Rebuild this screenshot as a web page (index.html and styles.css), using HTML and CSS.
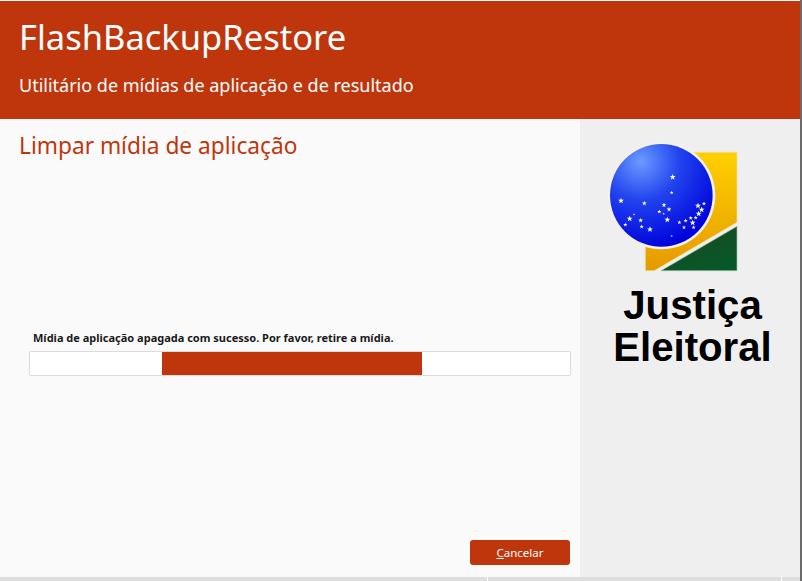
FILE: index.html
```html
<!DOCTYPE html>
<html lang="pt-BR">

<head>
    <meta charset="UTF-8">
    <title>FlashBackupRestore</title>
    <link rel="stylesheet" href="styles.css">
</head>

<body>
    <div class="window">
        <header class="banner">
            <h1>FlashBackupRestore</h1>
            <p>Utilitário de mídias de aplicação e de resultado</p>
        </header>
        <div class="content">
            <main class="panel">
                <h2>Limpar mídia de aplicação</h2>
                <p class="status">Mídia de aplicação apagada com sucesso. Por favor, retire a mídia.</p>
                <div class="progress">
                    <div class="progress-fill"></div>
                </div>
                <button class="cancel" type="button"><u>C</u>ancelar</button>
            </main>
            <aside class="side">
                <svg class="emblem" width="150" height="145" viewBox="0 0 450 435">
                    <defs>
                        <linearGradient id="gold" x1="0" y1="0" x2="0" y2="1">
                            <stop offset="0" stop-color="#ffd000" />
                            <stop offset="1" stop-color="#e59a00" />
                        </linearGradient>
                        <linearGradient id="green" x1="0.3" y1="0" x2="0.8" y2="1">
                            <stop offset="0" stop-color="#1a4a1e" />
                            <stop offset="1" stop-color="#06592b" />
                        </linearGradient>
                        <radialGradient id="globe" cx="0.3" cy="0.17" r="0.85">
                            <stop offset="0" stop-color="#6a9bff" />
                            <stop offset="0.45" stop-color="#2143ee" />
                            <stop offset="1" stop-color="#0004dc" />
                        </radialGradient>
                        <polygon id="star" points="0,-9 2.3,-2.8 9,-2.8 3.6,1.1 5.6,8 0,3.8 -5.6,8 -3.6,1.1 -9,-2.8 -2.3,-2.8" fill="#fff" />
                    </defs>
                    <polygon points="136,55 411,55 411,265 163,410 136,410" fill="url(#gold)" stroke="#f5e3a0" stroke-width="2" />
                    <polygon points="183,410 411,277 411,410" fill="url(#green)" stroke="#a8c4a8" stroke-width="2" />
                    <circle cx="184" cy="184" r="162" fill="#f4f1ea" />
                    <circle cx="184" cy="184" r="154" fill="url(#globe)" />
                    <use href="#star" x="218" y="129" />
                    <use href="#star" x="215" y="176" transform="translate(215 176) scale(.6) translate(-215 -176)" />
                    <use href="#star" x="63" y="200" />
                    <use href="#star" x="133" y="208" transform="translate(133 208) scale(.8) translate(-133 -208)" />
                    <use href="#star" x="192" y="213" transform="translate(192 213) scale(.8) translate(-192 -213)" />
                    <use href="#star" x="207" y="226" transform="translate(207 226) scale(.8) translate(-207 -226)" />
                    <use href="#star" x="178" y="233" transform="translate(178 233) scale(.7) translate(-178 -233)" />
                    <use href="#star" x="191" y="239" transform="translate(191 239) scale(.4) translate(-191 -239)" />
                    <use href="#star" x="102" y="241" transform="translate(102 241) scale(.4) translate(-102 -241)" />
                    <use href="#star" x="89" y="254" />
                    <use href="#star" x="76" y="272" transform="translate(76 272) scale(.7) translate(-76 -272)" />
                    <use href="#star" x="122" y="259" transform="translate(122 259) scale(.8) translate(-122 -259)" />
                    <use href="#star" x="125" y="278" transform="translate(125 278) scale(.7) translate(-125 -278)" />
                    <use href="#star" x="150" y="286" />
                    <use href="#star" x="202" y="257" />
                    <use href="#star" x="215" y="306" transform="translate(215 306) scale(.4) translate(-215 -306)" />
                    <use href="#star" x="238" y="265" transform="translate(238 265) scale(.7) translate(-238 -265)" />
                    <use href="#star" x="257" y="260" transform="translate(257 260) scale(.7) translate(-257 -260)" />
                    <use href="#star" x="272" y="252" transform="translate(272 252) scale(.7) translate(-272 -252)" />
                    <use href="#star" x="287" y="251" transform="translate(287 251) scale(.7) translate(-287 -251)" />
                    <use href="#star" x="296" y="239" />
                    <use href="#star" x="305" y="227" />
                    <use href="#star" x="294" y="215" />
                    <use href="#star" x="312" y="209" transform="translate(312 209) scale(.7) translate(-312 -209)" />
                    <use href="#star" x="278" y="266" />
                    <use href="#star" x="252" y="280" transform="translate(252 280) scale(.7) translate(-252 -280)" />
                    <use href="#star" x="281" y="280" transform="translate(281 280) scale(.7) translate(-281 -280)" />
                </svg>
                <div class="court">Justiça<br>Eleitoral</div>
            </aside>
        </div>
        <footer class="strip">
            <span class="tick"></span>
            <span class="tick"></span>
        </footer>
    </div>
</body>

</html>
```

FILE: styles.css
```css
html,
body {
    margin: 0;
    height: 100%;
    overflow: hidden;
}

body {
    font-family: "Noto Sans", sans-serif;
    background: #fff;
}

.window {
    display: flex;
    flex-direction: column;
    height: 581px;
    padding-top: 1px;
    box-sizing: border-box;
    border-right: 2px solid #6b6b6b;
}

.banner {
    height: 118px;
    flex: none;
    background: #bf360c;
    color: #fff;
    padding: 14px 0 0 19px;
    box-sizing: border-box;
}

.banner h1 {
    margin: 0;
    font-size: 34.5px;
    line-height: 44px;
    font-weight: 400;
}

.banner p {
    margin: 14px 0 0;
    font-size: 18px;
    line-height: 24px;
}

.content {
    flex: 1;
    display: flex;
    min-height: 0;
}

.panel {
    width: 580px;
    flex: none;
    background: #fafafa;
    display: flex;
    flex-direction: column;
    box-sizing: border-box;
    padding: 11px 9px 12px 19px;
}

.panel h2 {
    margin: 0;
    font-size: 22.7px;
    line-height: 32px;
    font-weight: 400;
    color: #bf360c;
}

.status {
    margin: 168px 0 5px 14px;
    font-size: 11px;
    line-height: 16px;
    font-weight: 700;
    color: #1a1a1a;
}

.progress {
    margin-left: 10px;
    height: 25px;
    box-sizing: border-box;
    background: #fff;
    border: 1px solid #dcdcdc;
    border-radius: 2px;
}

.progress-fill {
    width: 260px;
    height: 100%;
    margin-left: 132px;
    background: #bf360c;
}

.cancel {
    align-self: flex-end;
    margin-top: auto;
    margin-right: 1px;
    width: 100px;
    height: 25px;
    padding: 0;
    border: 0;
    border-radius: 3px;
    background: #bf360c;
    color: #fff;
    font-family: inherit;
    font-size: 11.5px;
}

.side {
    flex: 1;
    background: #efefef;
    display: flex;
    flex-direction: column;
    align-items: flex-start;
    padding: 15px 0 0 20px;
}

.emblem {
    display: block;
}

.court {
    width: 185px;
    margin-top: 6px;
    font-family: "Liberation Sans", Arial, sans-serif;
    font-size: 40.2px;
    line-height: 42px;
    font-weight: 700;
    text-align: center;
    color: #000;
}

.strip {
    height: 4px;
    flex: none;
    background: #dedede;
    display: flex;
    padding-left: 487px;
    gap: 293px;
}

.tick {
    width: 1px;
    background: #fff;
}
```
